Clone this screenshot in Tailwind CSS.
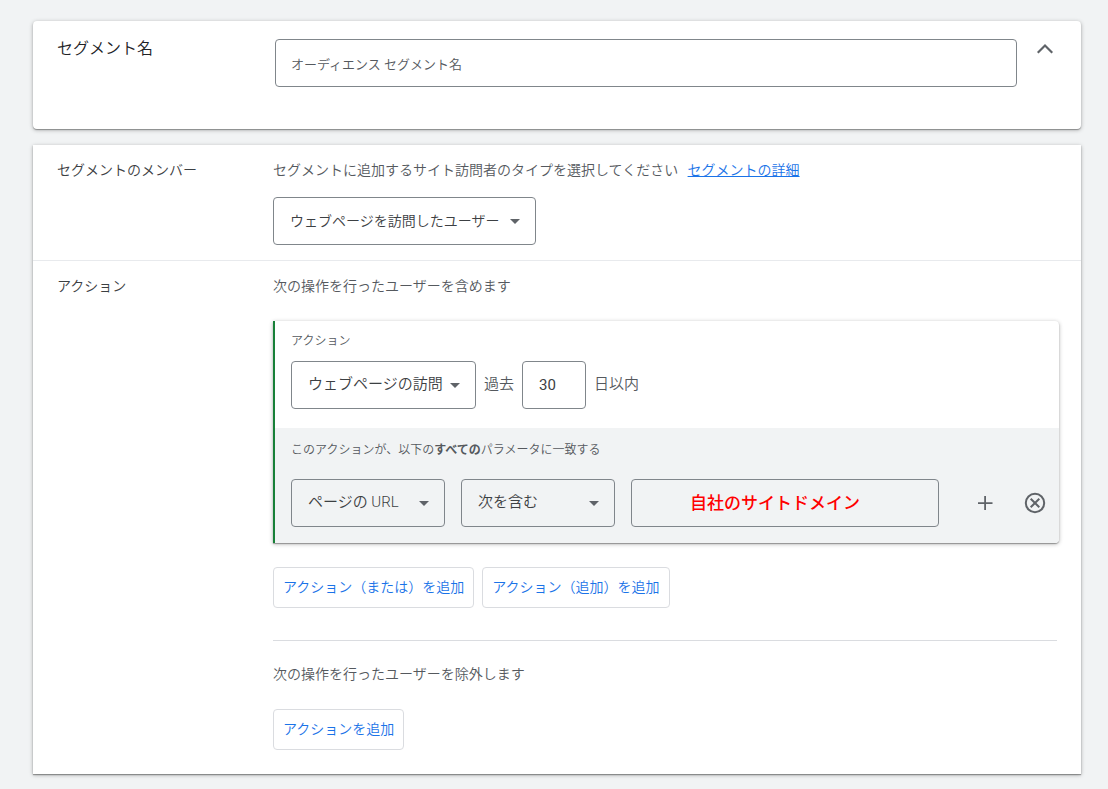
<!DOCTYPE html>
<html lang="ja">
<head>
<meta charset="utf-8">
<meta name="viewport" content="width=device-width, initial-scale=1">
<title>オーディエンス セグメント</title>
<script src="https://cdn.jsdelivr.net/npm/@tailwindcss/browser@4"></script>
</head>
<body class="min-h-screen bg-[#f1f3f4] font-['Roboto','Noto_Sans_CJK_JP',sans-serif] text-sm font-[350] text-[#55595e]">
<main class="flex flex-col gap-4 pt-[21px] pr-[27px] pb-[15px] pl-[33px]">

  <section class="flex items-start rounded bg-white px-6 pt-[18px] pb-[42px] shadow-[0_1px_1px_0_rgba(0,0,0,0.3),0_1px_4px_0_rgba(0,0,0,0.3)]">
    <label for="segment-name" class="w-[218px] shrink-0 text-base leading-5 text-[#202124]">セグメント名</label>
    <input id="segment-name" type="text" placeholder="オーディエンス セグメント名" class="h-12 min-w-0 flex-1 rounded border border-[#80868b] px-[15px] pt-[3px] text-[13px] text-[#3c4043] outline-none placeholder:text-[#55595e]">
    <button type="button" aria-label="閉じる" class="ml-4 flex h-5 w-6 items-center justify-center text-[#5f6368]">
      <svg class="h-6 w-6" viewBox="0 0 24 24" fill="currentColor"><path d="M12 7 4 15l1.500 1.500L12 10l6.500 6.500L20 15z"/></svg>
    </button>
  </section>

  <div class="bg-white shadow-[0_1px_1px_0_rgba(0,0,0,0.3),0_1px_4px_0_rgba(0,0,0,0.3)]">
    <section class="flex items-start px-6 py-[15px]">
      <label for="members" class="w-[216px] shrink-0 leading-5 text-[#3c4043]">セグメントのメンバー</label>
      <div class="flex-1">
        <p class="leading-5">セグメントに追加するサイト訪問者のタイプを選択してください <a href="#" class="ml-1.5 text-[#1a73e8] underline">セグメントの詳細</a></p>
        <div class="mt-[17px] grid w-[263px] items-center">
          <select id="members" class="col-start-1 row-start-1 h-12 w-full min-w-0 appearance-none rounded border border-[#80868b] pr-7 pl-4 text-[#3c4043]"><option>ウェブページを訪問したユーザー</option></select>
          <svg class="pointer-events-none col-start-1 row-start-1 mr-4 h-[5px] w-[10px] justify-self-end" viewBox="0 0 10 5" fill="#5f6368"><path d="M0 0h10L5 5z"/></svg>
        </div>
      </div>
    </section>

    <section class="flex items-start border-t border-[#e8eaed] pt-[15px] pr-[22px] pb-6 pl-6">
      <h2 class="w-[216px] shrink-0 leading-5 font-[350] text-[#3c4043]">アクション</h2>
      <div class="min-w-0 flex-1">
        <p class="leading-5">次の操作を行ったユーザーを含めます</p>

        <div class="mt-[25px] rounded-r border-l-2 border-[#188038] text-[15px] shadow-[0_1px_1px_0_rgba(0,0,0,0.3),0_1px_4px_0_rgba(0,0,0,0.3)]">
          <div class="px-4 pt-3 pb-[19px]">
            <label for="action" class="block text-xs leading-4">アクション</label>
            <div class="mt-3 flex items-center gap-2">
              <div class="grid w-[185px] items-center">
                <select id="action" class="col-start-1 row-start-1 h-12 w-full min-w-0 appearance-none rounded border border-[#80868b] pr-7 pl-4 text-[#3c4043]"><option>ウェブページの訪問</option></select>
                <svg class="pointer-events-none col-start-1 row-start-1 mr-4 h-[5px] w-[10px] justify-self-end" viewBox="0 0 10 5" fill="#5f6368"><path d="M0 0h10L5 5z"/></svg>
              </div>
              <label for="days">過去</label>
              <input id="days" type="text" value="30" class="h-12 w-16 rounded border border-[#80868b] px-4 font-normal text-[#3c4043]">
              <span>日以内</span>
            </div>
          </div>

          <div class="rounded-br bg-[#f1f3f4] pt-[14px] pr-3 pb-4 pl-4">
            <p class="text-xs leading-4">このアクションが、以下の<b class="font-bold">すべての</b>パラメータに一致する</p>
            <div class="mt-[21px] flex items-center gap-4">
              <div class="grid w-[154px] items-center">
                <select aria-label="パラメータ" class="col-start-1 row-start-1 h-12 w-full min-w-0 appearance-none rounded border border-[#80868b] pr-7 pl-4 text-[#3c4043]"><option>ページの URL</option></select>
                <svg class="pointer-events-none col-start-1 row-start-1 mr-4 h-[5px] w-[10px] justify-self-end" viewBox="0 0 10 5" fill="#5f6368"><path d="M0 0h10L5 5z"/></svg>
              </div>
              <div class="grid w-[154px] items-center">
                <select aria-label="条件" class="col-start-1 row-start-1 h-12 w-full min-w-0 appearance-none rounded border border-[#80868b] pr-7 pl-4 text-[#3c4043]"><option>次を含む</option></select>
                <svg class="pointer-events-none col-start-1 row-start-1 mr-4 h-[5px] w-[10px] justify-self-end" viewBox="0 0 10 5" fill="#5f6368"><path d="M0 0h10L5 5z"/></svg>
              </div>
              <input type="text" aria-label="値" value="自社のサイトドメイン" class="h-12 min-w-0 flex-1 rounded border border-[#80868b] pr-9 pb-1 pl-4 text-center text-[17px] font-medium text-[#ff0000]">
              <div class="flex shrink-0 gap-[26px] pl-[18px] text-[#5f6368]">
                <button type="button" aria-label="追加" class="h-6 w-6">
                  <svg class="h-6 w-6" viewBox="0 0 24 24" fill="currentColor"><path d="M11.200 5h1.800v6.200h6.500V13H13v6h-1.800v-6H5v-1.800h6.200z"/></svg>
                </button>
                <button type="button" aria-label="削除" class="h-6 w-6">
                  <svg class="h-6 w-6" viewBox="0 0 24 24" fill="none" stroke="currentColor" stroke-width="2"><circle cx="12" cy="12" r="9.200"/><path d="m7.700 7.700 8.600 8.600M16.300 7.700l-8.600 8.600"/></svg>
                </button>
              </div>
            </div>
          </div>
        </div>

        <div class="mt-6 flex gap-2">
          <button type="button" class="h-[41px] rounded border border-[#dadce0] px-[9px] pb-0.5 text-[#1a73e8]">アクション（または）を追加</button>
          <button type="button" class="h-[41px] rounded border border-[#dadce0] px-[9px] pb-0.5 text-[#1a73e8]">アクション（追加）を追加</button>
        </div>
        <hr class="mt-8 mr-[2px] border-[#dadce0]">
        <p class="mt-[23px] leading-5">次の操作を行ったユーザーを除外します</p>
        <button type="button" class="mt-[25px] block h-[41px] rounded border border-[#dadce0] px-[9px] pb-0.5 text-[#1a73e8]">アクションを追加</button>
      </div>
    </section>
  </div>
</main>
</body>
</html>
